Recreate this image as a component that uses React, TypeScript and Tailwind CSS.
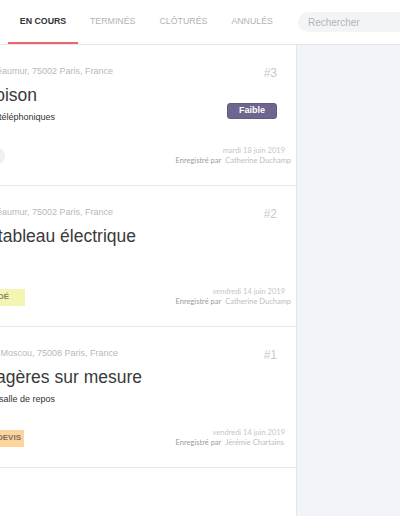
import { type ReactNode } from 'react'

const tabs = ['EN COURS', 'TERMINÉS', 'CLÔTURÉS', 'ANNULÉS']

type Card = {
  num: string
  address: string
  addressW: string
  title: string
  titleW: string
  desc?: string
  descW?: string
  priority?: string
  corner: ReactNode
  date: string
  by: string
  byPad: string
}

const cards: Card[] = [
  {
    num: '#3',
    address: '18 rue Réaumur, 75002 Paris, France',
    addressW: 'w-[113px]',
    title: 'Pose cloison',
    titleW: 'w-[37px]',
    desc: 'Installation de lignes téléphoniques',
    descW: 'w-[55px]',
    priority: 'Faible',
    corner: (
      <div className="flex w-[5px] justify-end overflow-hidden">
        <div className="h-[18px] w-[18px] shrink-0 rounded-full bg-[#f1f1f1]" />
      </div>
    ),
    date: 'mardi 18 juin 2019',
    by: 'Catherine Duchamp',
    byPad: 'pr-[5px]',
  },
  {
    num: '#2',
    address: '18 rue Réaumur, 75002 Paris, France',
    addressW: 'w-[113px]',
    title: 'Remplacement tableau électrique',
    titleW: 'w-[136px]',
    corner: (
      <div className="flex w-[25px] justify-end overflow-hidden">
        <span className="flex h-[17px] shrink-0 items-center whitespace-nowrap bg-[#f3f5b2] pl-[4px] pr-[16px] text-[8px] font-bold text-[#8c8262]">
          VALIDÉ
        </span>
      </div>
    ),
    date: 'vendredi 14 juin 2019',
    by: 'Catherine Duchamp',
    byPad: 'pr-[5px]',
  },
  {
    num: '#1',
    address: '15 rue de Moscou, 75008 Paris, France',
    addressW: 'w-[118px]',
    title: 'Étagères sur mesure',
    titleW: 'w-[142px]',
    desc: 'Étagères pour la salle de repos',
    descW: 'w-[55px]',
    corner: (
      <div className="flex w-[24px] justify-end overflow-hidden">
        <span className="flex h-[17px] shrink-0 items-center whitespace-nowrap bg-[#fcd49d] pl-[4px] pr-[3px] text-[8px] font-bold text-[#7e6c5c]">
          ENVOI DEVIS
        </span>
      </div>
    ),
    date: 'vendredi 14 juin 2019',
    by: 'Jérémie Chartains',
    byPad: 'pr-[12px]',
  },
]

function Clipped({ w, className, children }: { w: string; className: string; children: ReactNode }) {
  return (
    <div className={`flex justify-end overflow-hidden whitespace-nowrap ${w} ${className}`}>
      <span className="shrink-0">{children}</span>
    </div>
  )
}

function Intervention({ card }: { card: Card }) {
  return (
    <div className="flex h-[141px] flex-col border-b border-[#e9e9e9]">
      <div className="flex justify-between">
        <div className="flex flex-col pt-[20px]">
          <Clipped w={card.addressW} className="text-[9px] leading-[12px] text-[#b8b8b8]">
            {card.address}
          </Clipped>
          <Clipped w={card.titleW} className="mt-2 text-[17.5px] leading-[20px] text-[#3a3a3a]">
            {card.title}
          </Clipped>
          {card.desc && card.descW && (
            <Clipped w={card.descW} className="mt-[6px] text-[9px] leading-[12px] text-[#333]">
              {card.desc}
            </Clipped>
          )}
        </div>
        <div className="flex flex-col items-end pr-[19px] pt-[21px]">
          <span className="text-[12px] leading-[14px] text-[#c9c9c9]">{card.num}</span>
          {card.priority && (
            <span className="mt-[23px] flex h-[16px] w-[50px] items-center justify-center rounded-[3px] border border-[#625a80] bg-[#6f6690] text-[9px] font-bold text-white">
              {card.priority}
            </span>
          )}
        </div>
      </div>
      <div className="mt-auto flex items-center justify-between pb-[19px]">
        {card.corner}
        <div className="flex flex-col items-end font-['Lato',sans-serif] text-[7.5px] leading-[10px]">
          <span className="pr-[11px] text-[#c6c6c6]">{card.date}</span>
          <span className={card.byPad}>
            <span className="text-[#9b9b9b]">Enregistré par</span>
            <span className="ml-[4px] text-[#bdbdbd]">{card.by}</span>
          </span>
        </div>
      </div>
    </div>
  )
}

export default function App() {
  return (
    <div className="flex h-[516px] w-[400px] flex-col overflow-hidden bg-white font-['Liberation_Sans',Arial,sans-serif]">
      <div className="flex h-[45px] shrink-0 items-stretch border-b border-[#e6e6e6] pl-[8px]">
        {tabs.map((tab, i) => (
          <div
            key={tab}
            className={`flex shrink-0 items-center whitespace-nowrap border-b-2 pt-[2px] text-[8.8px] ${
              i === 0 ? 'w-[70px] justify-center border-[#e8646f] font-bold text-[#333]' : 'px-3 border-transparent text-[#b3b3b3]'
            }`}
          >
            {tab}
          </div>
        ))}
        <div className="ml-[13px] flex flex-1 items-center">
          <input
            placeholder="Rechercher"
            className="h-[20px] w-[140px] shrink-0 rounded-full bg-[#f2f4f7] pl-[10px] text-[10px] text-[#555] outline-none placeholder:text-[#b4b4b4]"
          />
        </div>
      </div>
      <div className="flex flex-1">
        <div className="w-[297px] shrink-0 border-r border-[#e6e6e6]">
          {cards.map((card) => (
            <Intervention key={card.num} card={card} />
          ))}
        </div>
        <div className="flex-1 bg-[#f1f4f8]" />
      </div>
    </div>
  )
}
